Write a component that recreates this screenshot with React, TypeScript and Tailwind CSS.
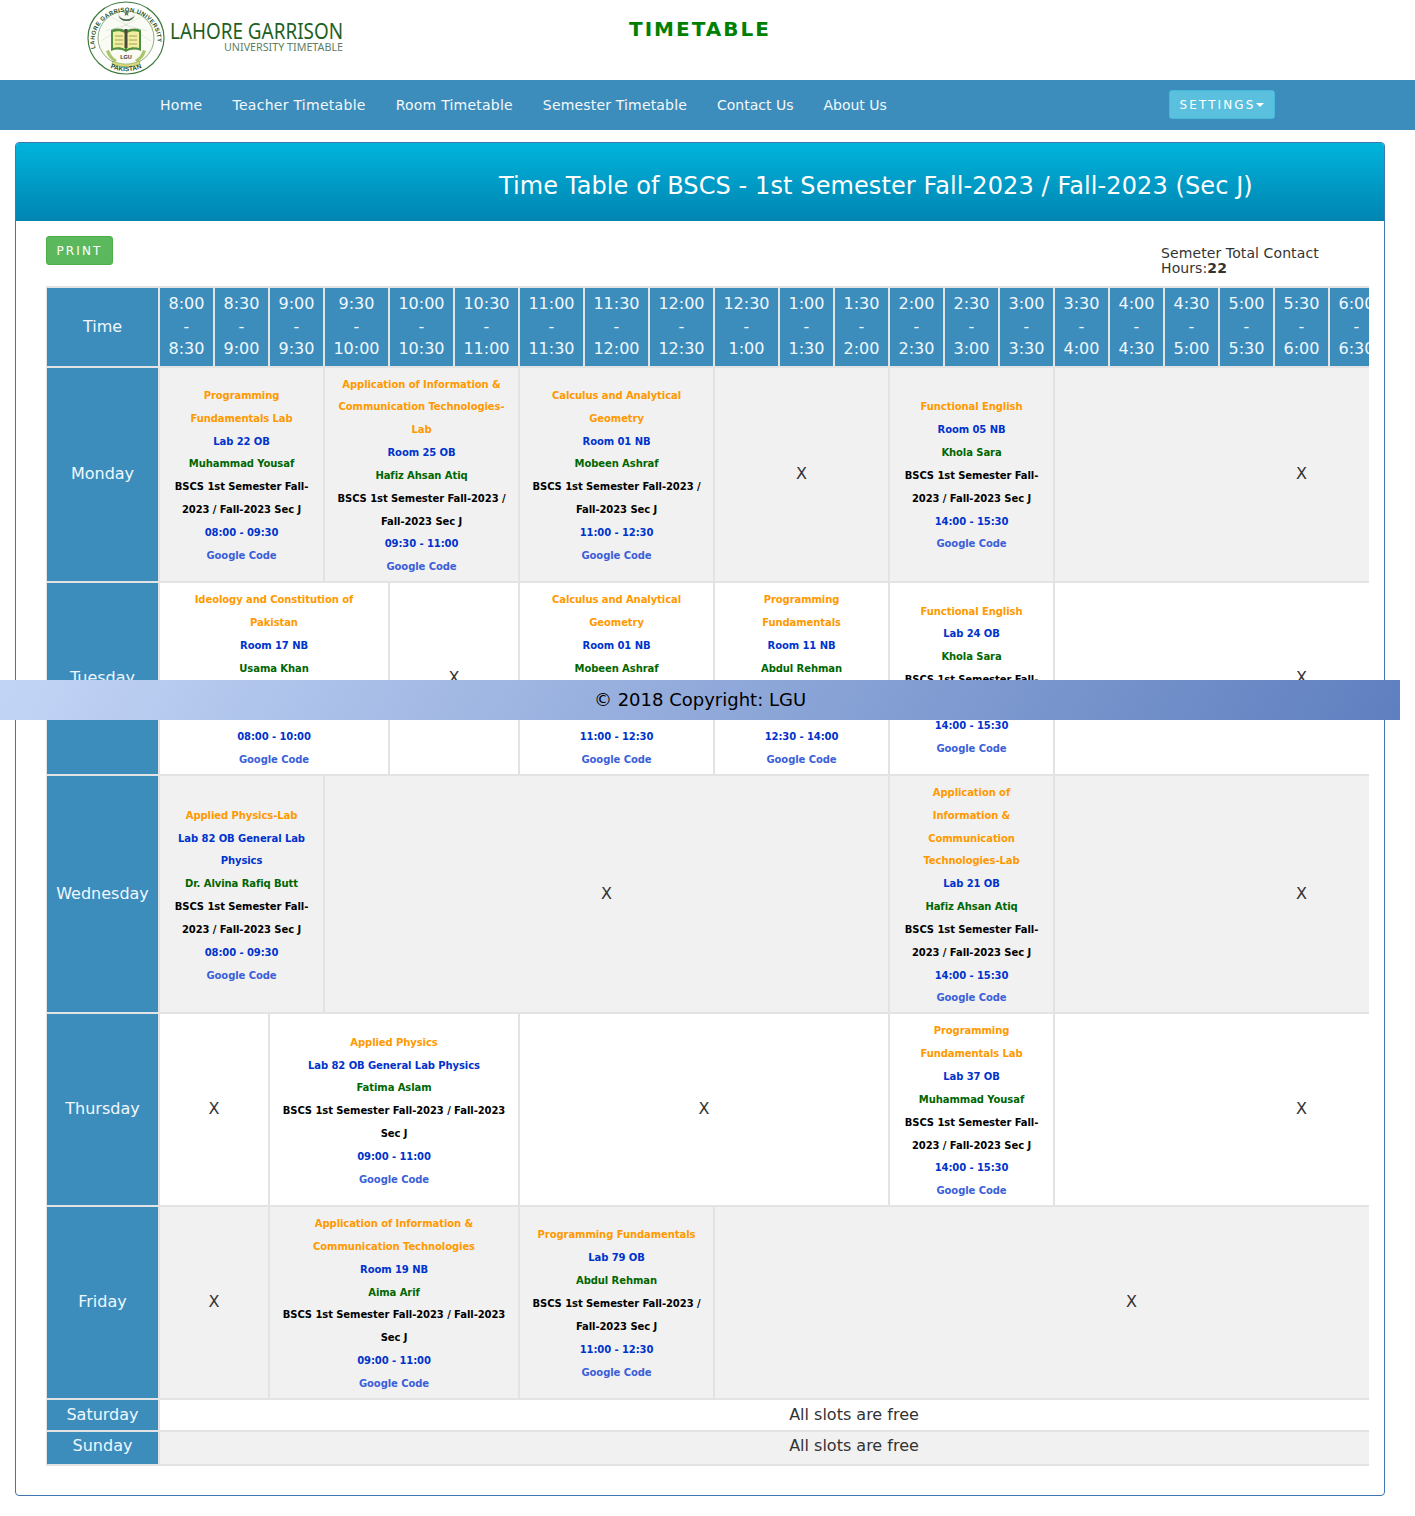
import React from "react";

const NAV = [
  { label: "Home", cls: "tracking-[0.28px]" },
  { label: "Teacher Timetable", cls: "tracking-[0.28px]" },
  { label: "Room Timetable", cls: "tracking-[0.22px]" },
  { label: "Semester Timetable", cls: "tracking-[0.17px]" },
  { label: "Contact Us", cls: "" },
  { label: "About Us", cls: "" },
];

const TIMES = [
  ["8:00", "8:30", 55], ["8:30", "9:00", 55], ["9:00", "9:30", 55], ["9:30", "10:00", 65], ["10:00", "10:30", 65],
  ["10:30", "11:00", 65], ["11:00", "11:30", 65], ["11:30", "12:00", 65], ["12:00", "12:30", 65], ["12:30", "1:00", 65],
  ["1:00", "1:30", 55], ["1:30", "2:00", 55], ["2:00", "2:30", 55], ["2:30", "3:00", 55], ["3:00", "3:30", 55],
  ["3:30", "4:00", 55], ["4:00", "4:30", 55], ["4:30", "5:00", 55], ["5:00", "5:30", 55], ["5:30", "6:00", 55],
  ["6:00", "6:30", 55], ["6:30", "7:00", 55], ["7:00", "7:30", 55], ["7:30", "8:00", 55],
] as const;

type Slot = { span: number; title?: string; room?: string; teacher?: string; time?: string };

const pf = "Programming Fundamentals";
const AICT = "Application of Information & Communication Technologies";

const DAYS: { name: string; slots: Slot[] }[] = [
  {
    name: "Monday",
    slots: [
      { span: 3, title: pf + " Lab", room: "Lab 22 OB", teacher: "Muhammad Yousaf", time: "08:00 - 09:30" },
      { span: 3, title: AICT + "-Lab", room: "Room 25 OB", teacher: "Hafiz Ahsan Atiq", time: "09:30 - 11:00" },
      { span: 3, title: "Calculus and Analytical Geometry", room: "Room 01 NB", teacher: "Mobeen Ashraf", time: "11:00 - 12:30" },
      { span: 3 },
      { span: 3, title: "Functional English", room: "Room 05 NB", teacher: "Khola Sara", time: "14:00 - 15:30" },
      { span: 9 },
    ],
  },
  {
    name: "Tuesday",
    slots: [
      { span: 4, title: "Ideology and Constitution of Pakistan", room: "Room 17 NB", teacher: "Usama Khan", time: "08:00 - 10:00" },
      { span: 2 },
      { span: 3, title: "Calculus and Analytical Geometry", room: "Room 01 NB", teacher: "Mobeen Ashraf", time: "11:00 - 12:30" },
      { span: 3, title: pf, room: "Room 11 NB", teacher: "Abdul Rehman", time: "12:30 - 14:00" },
      { span: 3, title: "Functional English", room: "Lab 24 OB", teacher: "Khola Sara", time: "14:00 - 15:30" },
      { span: 9 },
    ],
  },
  {
    name: "Wednesday",
    slots: [
      { span: 3, title: "Applied Physics-Lab", room: "Lab 82 OB General Lab Physics", teacher: "Dr. Alvina Rafiq Butt", time: "08:00 - 09:30" },
      { span: 9 },
      { span: 3, title: "Application of Information & Communication Technologies-Lab", room: "Lab 21 OB", teacher: "Hafiz Ahsan Atiq", time: "14:00 - 15:30" },
      { span: 9 },
    ],
  },
  {
    name: "Thursday",
    slots: [
      { span: 2 },
      { span: 4, title: "Applied Physics", room: "Lab 82 OB General Lab Physics", teacher: "Fatima Aslam", time: "09:00 - 11:00" },
      { span: 6 },
      { span: 3, title: pf + " Lab", room: "Lab 37 OB", teacher: "Muhammad Yousaf", time: "14:00 - 15:30" },
      { span: 9 },
    ],
  },
  {
    name: "Friday",
    slots: [
      { span: 2 },
      { span: 4, title: AICT, room: "Room 19 NB", teacher: "Aima Arif", time: "09:00 - 11:00" },
      { span: 3, title: pf, room: "Lab 79 OB", teacher: "Abdul Rehman", time: "11:00 - 12:30" },
      { span: 15 },
    ],
  },
];

function Logo() {
  return (
    <svg width="260" height="76" viewBox="0 0 260 76" className="block">
      <defs>
        <path id="sealTop" d="M8.500 47.500A31.500 29.500 0 1 1 69.500 47.500" />
        <path id="sealBottom" d="M19 64.500A36 34 0 0 0 59 64.500" />
      </defs>
      <ellipse cx="39" cy="37" rx="38" ry="36" fill="#fff" stroke="#3f7a3f" strokeWidth="1.200" />
      <ellipse cx="39" cy="37" rx="28" ry="27" fill="#fbfbf6" stroke="#6f9a5a" strokeWidth="0.800" />
      <path d="M39 24 18 30M39 24 24 16M39 24 54 16M39 24 60 30M39 24 14 40M39 24 64 40M39 24 30 11M39 24 48 11" stroke="#cfdac6" strokeWidth="0.500" />
      <text fontSize="5.900" fontWeight="700" fill="#234f23" fontFamily="Liberation Sans, sans-serif" letterSpacing="0.35">
        <textPath href="#sealTop">LAHORE GARRISON UNIVERSITY</textPath>
      </text>
      <path d="M31 14a9 9 0 0 0 17 0 9.500 7.500 0 0 1-17 0z" fill="#47674a" />
      <path d="m39.500 9 .8 2.200 2.200.1-1.700 1.400.6 2.200-1.900-1.200-1.900 1.200.6-2.200-1.700-1.400 2.200-.1z" fill="#5d7a5d" />
      <path d="M24 29c5-2 10-2 15 1 5-3 10-3 15-1v21c-5-2-10-2-15 1-5-3-10-3-15-1z" fill="#4f8f3f" />
      <path d="M26 31c4-1 8-1 12 1v16c-4-2-8-2-12-1zM52 31c-4-1-8-1-12 1v16c4-2 8-2 12-1z" fill="#f2ee9f" />
      <path d="M28 35h8M28 39h8M28 43h8M42 35h8M42 39h8M42 43h8" stroke="#8a8a50" strokeWidth="0.800" />
      <rect x="37.500" y="28" width="3" height="19" fill="#4a4a3a" />
      <text x="39" y="57.500" fontSize="5.500" fontWeight="700" fill="#333" textAnchor="middle" fontFamily="Liberation Sans, sans-serif">LGU</text>
      <path d="M19 50c2 6 5 9 9 11l2-2c-4-2-6-5-8-10zM59 50c-2 6-5 9-9 11l-2-2c4-2 6-5 8-10z" fill="#a9c46a" />
      <path d="M26 60c8 4 18 4 26 0l1 3c-9 4-19 4-28 0z" fill="#d9d77a" stroke="#6f9a5a" strokeWidth="0.500" />
      <text fontSize="6.500" fontWeight="700" fill="#234f23" fontFamily="Liberation Sans, sans-serif" textAnchor="middle">
        <textPath href="#sealBottom" startOffset="50%">PAKISTAN</textPath>
      </text>
      <text x="83" y="38" fontSize="22" fill="#1f5f1f" fontFamily="Noto Sans, sans-serif" textLength="173" lengthAdjust="spacingAndGlyphs">LAHORE GARRISON</text>
      <text x="137" y="50" fontSize="10" fill="#60805f" fontFamily="Noto Sans, sans-serif" textLength="119" lengthAdjust="spacingAndGlyphs">UNIVERSITY TIMETABLE</text>
    </svg>
  );
}

function SlotCell({ slot, zebra }: { slot: Slot; zebra: boolean }) {
  const bg = zebra ? "bg-[#f1f1f1]" : "bg-white";
  if (!slot.title) {
    return (
      <td colSpan={slot.span} className={`border-2 border-[#e3e3e3] text-center align-middle text-[16px] text-[#333] ${bg}`}>
        X
      </td>
    );
  }
  return (
    <td colSpan={slot.span} className={`border-2 border-[#e3e3e3] px-[10px] pt-[6px] pb-[2px] text-center align-middle text-[10px] leading-[22.84px] font-bold tracking-[-0.08px] ${bg}`}>
      <div className="text-[#ff9900]">{slot.title}</div>
      <div className="text-[#0033cc]">{slot.room}</div>
      <div className="text-[#006600]">{slot.teacher}</div>
      <div className="text-black">BSCS 1st Semester Fall-2023 / Fall-2023 Sec J</div>
      <div className="text-[#0033cc]">{slot.time}</div>
      <div className="text-[#3b5fd9]">Google Code</div>
    </td>
  );
}

export default function App() {
  return (
    <div className="relative min-h-[1516px] bg-white font-['DejaVu_Sans',sans-serif] text-[#333]">
      <header className="flex h-[80px] items-start">
        <div className="ml-[87px] mt-[1px] w-[260px]">
          <Logo />
        </div>
        <h1 className="ml-[282px] mt-[17px] text-[20px] leading-[24px] font-bold tracking-[2px] text-[#008000]">TIMETABLE</h1>
      </header>

      <nav className="flex h-[50px] items-center bg-[#3c8dbc] pl-[160px] text-[14px] text-[#f4f8fb]">
        <div className="flex w-[1009px] gap-[30px]">
          {NAV.map((item) => (
            <a key={item.label} href="#" className={`whitespace-nowrap ${item.cls}`}>{item.label}</a>
          ))}
        </div>
        <button className="mb-[1px] flex h-[29px] w-[106px] items-center justify-center rounded-[3px] border border-[#46b8da] bg-[#5bc0de] text-[12px] tracking-[2.1px] text-white">
          SETTINGS
          <span className="ml-[1px] border-x-[4px] border-t-[4px] border-x-transparent border-t-white" />
        </button>
      </nav>

      <main className="ml-[15px] mt-[12px] h-[1354px] w-[1370px] overflow-hidden rounded-[4px] border border-[#3f75b0]">
        <div className="flex h-[77px] items-center bg-gradient-to-b from-[#00b4dc] to-[#0085b2] pl-[483px] pt-[9px] text-[24px] tracking-[0.1px] text-white">
          Time Table of BSCS - 1st Semester Fall-2023 / Fall-2023 (Sec J)
        </div>

        <div className="flex h-[66px] items-start border-t border-[#0085b2] pl-[30px]">
          <button className="mt-[15px] h-[29px] w-[67px] rounded-[3px] border border-[#4cae4c] bg-[#5cb85c] text-[12px] tracking-[2.1px] text-white">PRINT</button>
          <p className="ml-[1048px] mt-[25px] w-[200px] text-[14px] leading-[15px] tracking-[0.1px] text-[#333]">
            Semeter Total Contact Hours:<b>22</b>
          </p>
        </div>

        <div className="ml-[30px] w-[1323px] overflow-hidden">
          <table className="-ml-[1px] w-[1503px] table-fixed border-collapse text-[16px] leading-[22.5px]">
            <colgroup>
              <col className="w-[113px]" />
              {TIMES.map(([from, , w]) => (
                <col key={from + w} style={{ width: w }} />
              ))}
            </colgroup>
            <thead>
              <tr>
                <th className="border-2 border-[#e3e3e3] bg-[#3c8dbc] font-normal text-[#f0f8ff]">Time</th>
                {TIMES.map(([from, to]) => (
                  <th key={from + to} className="whitespace-nowrap border-2 border-[#e3e3e3] bg-[#3c8dbc] py-[5px] text-center font-normal text-[#f0f8ff]">
                    {from}
                    <br />-<br />
                    {to}
                  </th>
                ))}
              </tr>
            </thead>
            <tbody>
              {DAYS.map((day, i) => (
                <tr key={day.name}>
                  <td className="border-2 border-[#e3e3e3] bg-[#3c8dbc] text-center text-[#f0f8ff]">{day.name}</td>
                  {day.slots.map((slot, j) => (
                    <SlotCell key={j} slot={slot} zebra={i % 2 === 0} />
                  ))}
                </tr>
              ))}
              <tr>
                <td className="border-2 border-[#e3e3e3] bg-[#3c8dbc] py-[4px] text-center text-[#f0f8ff]">Saturday</td>
                <td colSpan={24} className="border-2 border-[#e3e3e3] bg-white py-[4px] text-center text-[#333]">All slots are free</td>
              </tr>
              <tr>
                <td className="border-2 border-[#e3e3e3] bg-[#3c8dbc] pt-[3px] pb-[6px] text-center text-[#f0f8ff]">Sunday</td>
                <td colSpan={24} className="border-2 border-[#e3e3e3] bg-[#f1f1f1] pt-[3px] pb-[6px] text-center text-[#333]">All slots are free</td>
              </tr>
            </tbody>
          </table>
        </div>
      </main>

      <footer className="absolute left-0 top-[680px] flex h-[40px] w-[1400px] items-center justify-center bg-[linear-gradient(120deg,#c3d5f6,#5f7fbf)] pb-[1px] text-[18px] text-black">
        © 2018 Copyright: LGU
      </footer>
    </div>
  );
}
